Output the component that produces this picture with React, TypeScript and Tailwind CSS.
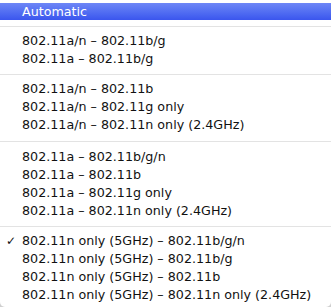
const groups: string[][] = [
  ["802.11a/n – 802.11b/g", "802.11a – 802.11b/g"],
  ["802.11a/n – 802.11b", "802.11a/n – 802.11g only", "802.11a/n – 802.11n only (2.4GHz)"],
  [
    "802.11a – 802.11b/g/n",
    "802.11a – 802.11b",
    "802.11a – 802.11g only",
    "802.11a – 802.11n only (2.4GHz)",
  ],
  [
    "802.11n only (5GHz) – 802.11b/g/n",
    "802.11n only (5GHz) – 802.11b/g",
    "802.11n only (5GHz) – 802.11b",
    "802.11n only (5GHz) – 802.11n only (2.4GHz)",
  ],
];

const selected = "802.11n only (5GHz) – 802.11b/g/n";

function Separator({ h }: { h: string }) {
  return (
    <div className={`flex items-center ${h}`}>
      <div className="h-px w-full bg-[#e3e3e3]" />
    </div>
  );
}

function Item({ label }: { label: string }) {
  return (
    <div className="relative flex h-[18px] items-center pl-[22px] text-[#111]">
      {label === selected && (
        <span className="absolute left-[6px] text-[12px]">✓</span>
      )}
      {label}
    </div>
  );
}

export default function App() {
  return (
    <div className="h-[307px] w-[331px] overflow-hidden bg-[#cfcfcf]">
      <div
        className="flex h-full flex-col rounded-b-[5px] bg-white pt-[3px] text-[12.7px]"
        style={{ fontFamily: '"DejaVu Sans", "Lucida Grande", sans-serif' }}
      >
        <div className="flex h-[17px] items-center bg-gradient-to-b from-[#6e86f6] to-[#3b55ee] pl-[22px] text-white">
          Automatic
        </div>
        <Separator h="h-[12px]" />
        {groups[0].map((l) => (
          <Item key={l} label={l} />
        ))}
        <Separator h="h-[12px]" />
        {groups[1].map((l) => (
          <Item key={l} label={l} />
        ))}
        <Separator h="h-[14px]" />
        {groups[2].map((l) => (
          <Item key={l} label={l} />
        ))}
        <Separator h="h-[12px]" />
        {groups[3].map((l) => (
          <Item key={l} label={l} />
        ))}
      </div>
    </div>
  );
}
